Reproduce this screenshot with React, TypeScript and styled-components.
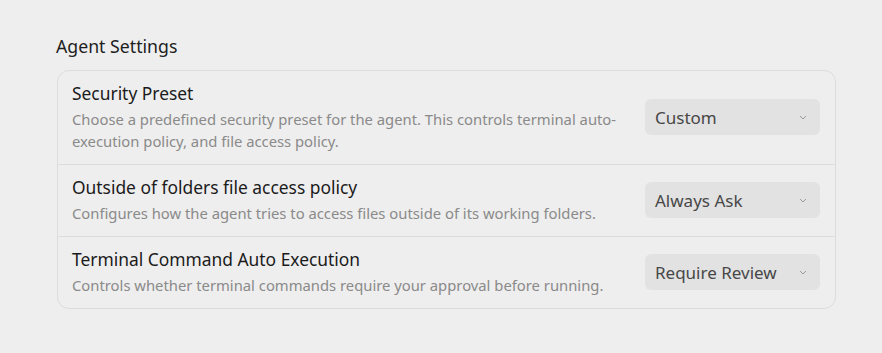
import React from "react";
import styled, { createGlobalStyle } from "styled-components";

const Global = createGlobalStyle`
  html, body { margin: 0; padding: 0; background: #eeeeee; }
  body { font-family: "Segoe UI", "Noto Sans", "Open Sans", sans-serif; }
`;

const Page = styled.div`
  width: 882px;
  height: 353px;
  box-sizing: border-box;
  padding: 34px 46px 0 56px;
`;

const Heading = styled.h2`
  margin: 0 0 12px 0;
  font-size: 17.7px;
  font-weight: 400;
  line-height: 24px;
  color: #1e1e1e;
`;

const Card = styled.div`
  margin-left: 1px;
  border: 1px solid #dcdcdc;
  border-radius: 12px;
  overflow: hidden;
`;

const Row = styled.div`
  display: flex;
  align-items: center;
  justify-content: space-between;
  padding: 11px 15px 12px 14px;
  & + & { border-top: 1px solid #dcdcdc; }
`;

const Texts = styled.div`
  display: flex;
  flex-direction: column;
  gap: 4px;
  max-width: 560px;
`;

const Title = styled.div`
  font-size: 17.4px;
  line-height: 22px;
  color: #1b1b1b;
`;

const Desc = styled.div`
  font-size: 14.8px;
  line-height: 22px;
  color: #8a8a8a;
`;

const Select = styled.div`
  width: 175px;
  height: 36px;
  box-sizing: border-box;
  border-radius: 6px;
  background: #e2e2e2;
  display: flex;
  align-items: center;
  justify-content: space-between;
  padding: 0 13px 0 10px;
  font-size: 17px;
  color: #474747;
  flex-shrink: 0;
`;

const Chevron = () => (
  <svg width="8" height="5" viewBox="0 0 8 5" fill="none">
    <path d="M1 1l3 3 3-3" stroke="#9a9a9a" strokeWidth="1" />
  </svg>
);

const rows = [
  {
    title: "Security Preset",
    desc: "Choose a predefined security preset for the agent. This controls terminal auto-execution policy, and file access policy.",
    value: "Custom",
  },
  {
    title: "Outside of folders file access policy",
    desc: "Configures how the agent tries to access files outside of its working folders.",
    value: "Always Ask",
  },
  {
    title: "Terminal Command Auto Execution",
    desc: "Controls whether terminal commands require your approval before running.",
    value: "Require Review",
  },
];

export default function App() {
  return (
    <>
      <Global />
      <Page>
        <Heading>Agent Settings</Heading>
        <Card>
          {rows.map((r) => (
            <Row key={r.title}>
              <Texts>
                <Title>{r.title}</Title>
                <Desc>{r.desc}</Desc>
              </Texts>
              <Select>
                <span>{r.value}</span>
                <Chevron />
              </Select>
            </Row>
          ))}
        </Card>
      </Page>
    </>
  );
}
